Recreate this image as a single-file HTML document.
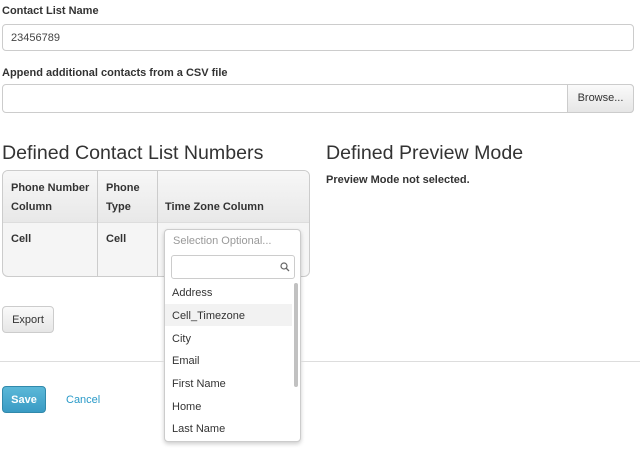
<!DOCTYPE html>
<html><head><style>
body{margin:0;width:640px;height:452px;background:#fff;font-family:"Liberation Sans",Arial,sans-serif;color:#333;position:relative;overflow:hidden}
.a{position:absolute}
.lbl{font-size:11px;font-weight:bold;color:#333}
.inp{border:1px solid #ccc;border-radius:4px;background:#fff;box-sizing:border-box}
.th{font-size:11px;font-weight:bold;line-height:19px}
.it{font-size:11px;color:#333;left:172px}
</style></head><body>
<div class="a lbl" style="left:2px;top:5px">Contact List Name</div>
<div class="a inp" style="left:2px;top:24px;width:632px;height:27px"></div>
<div class="a" style="left:11px;top:32px;font-size:11px;color:#444">23456789</div>
<div class="a lbl" style="left:2px;top:67px">Append additional contacts from a CSV file</div>
<div class="a inp" style="left:2px;top:84px;width:632px;height:29px"></div>
<div class="a" style="left:567px;top:84px;width:67px;height:29px;box-sizing:border-box;border:1px solid #ccc;border-radius:0 4px 4px 0;background:linear-gradient(#fafafa,#e6e6e6);font-size:11px;text-align:center;line-height:27px">Browse...</div>

<div class="a" style="left:2px;top:142px;font-size:19.6px;color:#333">Defined Contact List Numbers</div>
<div class="a" style="left:326px;top:142px;font-size:19.6px;color:#333">Defined Preview Mode</div>
<div class="a lbl" style="left:326px;top:174px">Preview Mode not selected.</div>

<div class="a" style="left:2px;top:170px;width:308px;height:107px;box-sizing:border-box;border:1px solid #ccc;border-radius:6px;overflow:hidden;background:#f5f5f5">
 <div class="a" style="left:0;top:0;width:308px;height:51px;background:linear-gradient(#f7f7f7,#e8e8e8);border-bottom:1px solid #ddd"></div>
 <div class="a" style="left:94px;top:0;width:1px;height:107px;background:#ccc"></div>
 <div class="a" style="left:154px;top:0;width:1px;height:107px;background:#ccc"></div>
 <div class="a th" style="left:8px;top:8px">Phone Number<br>Column</div>
 <div class="a th" style="left:103px;top:8px">Phone<br>Type</div>
 <div class="a th" style="left:162px;top:27px">Time Zone Column</div>
 <div class="a th" style="left:8px;top:59px">Cell</div>
 <div class="a th" style="left:103px;top:59px">Cell</div>
</div>

<div class="a" style="left:164px;top:229px;width:137px;height:213px;box-sizing:border-box;border:1px solid #ccc;border-radius:4px;background:#fff;box-shadow:0 2px 4px rgba(0,0,0,.2)"></div>
<div class="a" style="left:173px;top:235px;font-size:11px;color:#999">Selection Optional...</div>
<div class="a inp" style="left:171px;top:255px;width:124px;height:24px;border-radius:3px"></div>
<svg class="a" style="left:280px;top:262px" width="10" height="10" viewBox="0 0 10 10"><circle cx="4" cy="4" r="3" fill="none" stroke="#666" stroke-width="1.2"/><line x1="6.2" y1="6.2" x2="9" y2="9" stroke="#666" stroke-width="1.3"/></svg>
<div class="a" style="left:165px;top:304px;width:127px;height:22px;background:#f2f2f2"></div>
<div class="a" style="left:294px;top:283px;width:4px;height:104px;background:#c1c1c1;border-radius:2px"></div>
<div class="a it" style="top:287px">Address</div>
<div class="a it" style="top:310px">Cell_Timezone</div>
<div class="a it" style="top:333px">City</div>
<div class="a it" style="top:355px">Email</div>
<div class="a it" style="top:378px">First Name</div>
<div class="a it" style="top:401px">Home</div>
<div class="a it" style="top:423px">Last Name</div>

<div class="a" style="left:2px;top:306px;width:52px;height:27px;box-sizing:border-box;border:1px solid #ccc;border-radius:4px;background:linear-gradient(#fafafa,#e6e6e6);font-size:11px;text-align:center;line-height:27px">Export</div>
<div class="a" style="left:0;top:361px;width:164px;height:1px;background:#ddd"></div>
<div class="a" style="left:301px;top:361px;width:339px;height:1px;background:#ddd"></div>
<div class="a" style="left:2px;top:386px;width:44px;height:27px;box-sizing:border-box;border:1px solid #3189ab;border-radius:4px;background:linear-gradient(#5bb8d8,#3a9bc4);color:#fff;font-size:11px;font-weight:bold;text-align:center;line-height:27px">Save</div>
<div class="a" style="left:66px;top:394px;font-size:11px;color:#2a9ac8">Cancel</div>
</body></html>
